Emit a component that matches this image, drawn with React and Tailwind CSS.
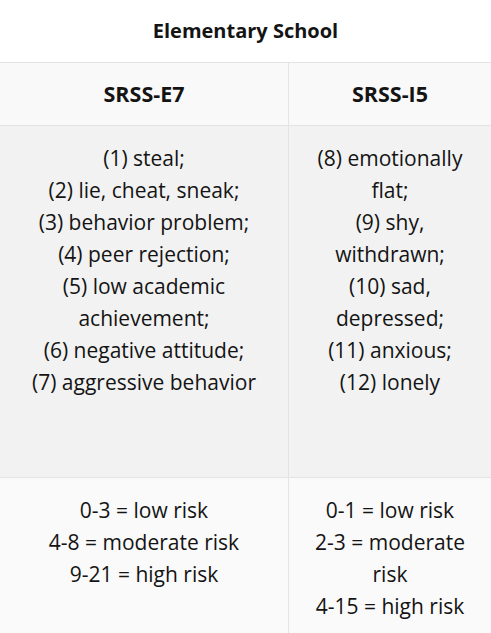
export default function App() {
  const col1 = [
    "(1) steal;",
    "(2) lie, cheat, sneak;",
    "(3) behavior problem;",
    "(4) peer rejection;",
    "(5) low academic achievement;",
    "(6) negative attitude;",
    "(7) aggressive behavior",
  ];
  const col2 = [
    "(8) emotionally flat;",
    "(9) shy, withdrawn;",
    "(10) sad, depressed;",
    "(11) anxious;",
    "(12) lonely",
  ];
  const r1 = ["0-3 = low risk", "4-8 = moderate risk", "9-21 = high risk"];
  const r2 = ["0-1 = low risk", "2-3 = moderate risk", "4-15 = high risk"];
  return (
    <div
      className="w-[491px] h-[633px] overflow-hidden bg-white text-[#141414]"
      style={{ fontFamily: "'Open Sans', 'Noto Sans', sans-serif" }}
    >
      <div className="h-[62px] flex items-center justify-center text-[20px] font-bold">
        Elementary School
      </div>
      <div className="grid grid-cols-[289px_1fr] border-t border-[#e4e4e4]">
        <div className="h-[62px] bg-[#f9f9f9] flex items-center justify-center text-[21.5px] font-bold border-r border-[#e4e4e4]">
          SRSS-E7
        </div>
        <div className="h-[62px] bg-[#f9f9f9] flex items-center justify-center text-[21.5px] font-bold">
          SRSS-I5
        </div>
        <div className="h-[352px] bg-[#f2f2f2] border-t border-r border-[#e4e4e4] px-4 py-4 text-center text-[21px] leading-8">
          {col1.map((t) => (
            <div key={t}>{t}</div>
          ))}
        </div>
        <div className="h-[352px] bg-[#f2f2f2] border-t border-[#e4e4e4] px-4 py-4 text-center text-[21px] leading-8">
          {col2.map((t) => (
            <div key={t}>{t}</div>
          ))}
        </div>
        <div className="bg-[#fafafa] border-t border-r border-[#e4e4e4] px-4 py-4 text-center text-[21px] leading-8 h-[160px]">
          {r1.map((t) => (
            <div key={t}>{t}</div>
          ))}
        </div>
        <div className="bg-[#fafafa] border-t border-[#e4e4e4] px-4 py-4 text-center text-[21px] leading-8 h-[160px]">
          {r2.map((t) => (
            <div key={t}>{t}</div>
          ))}
        </div>
      </div>
    </div>
  );
}
